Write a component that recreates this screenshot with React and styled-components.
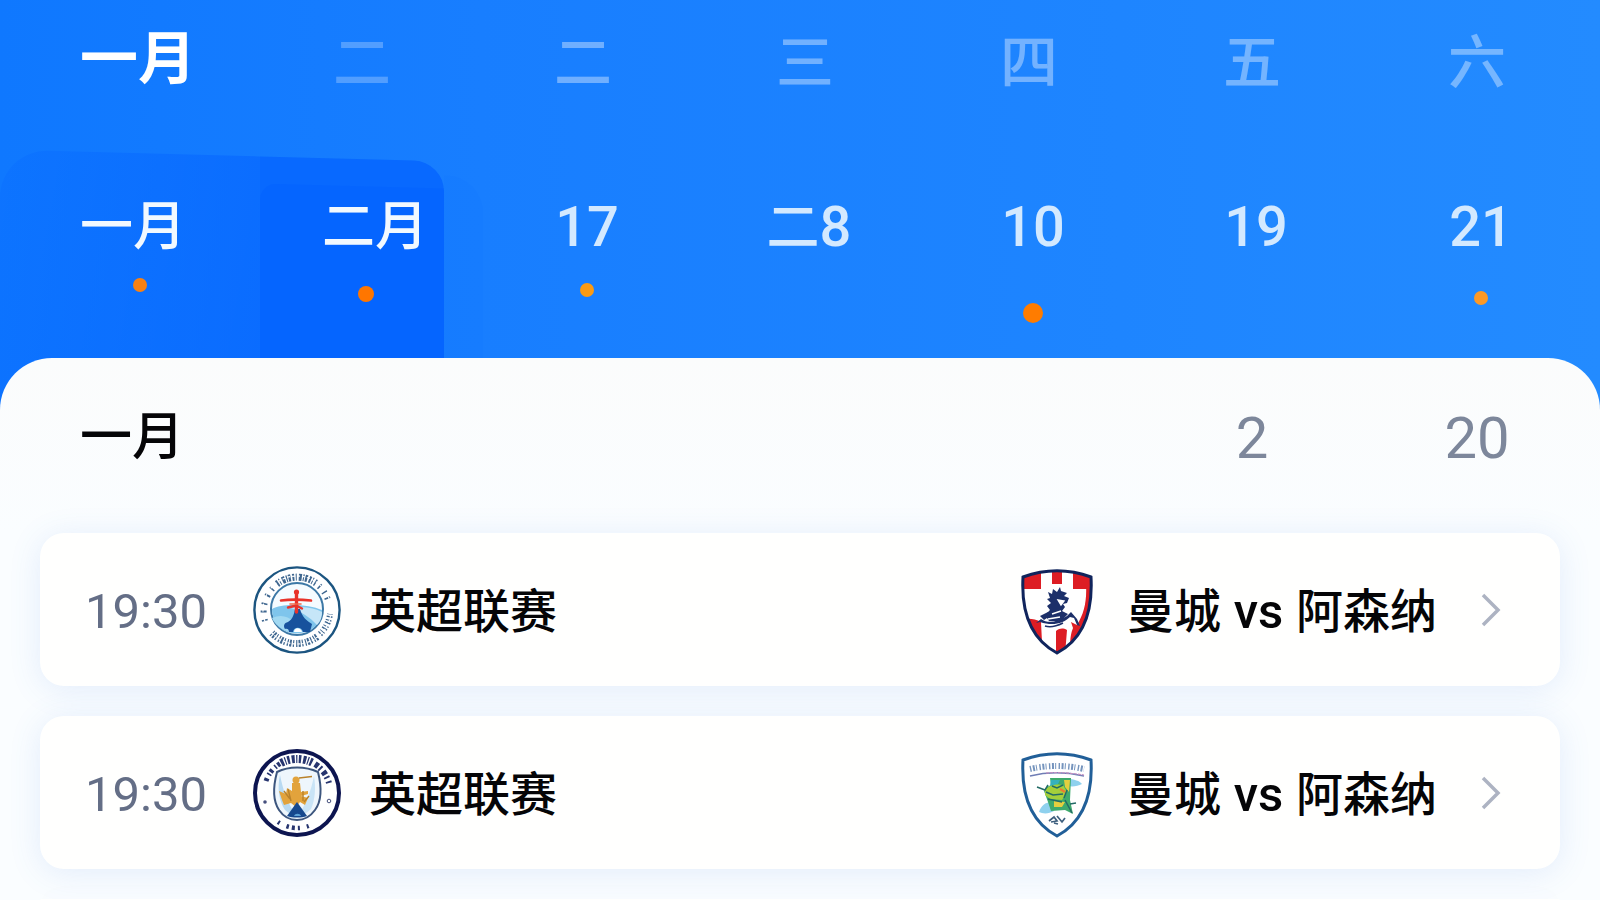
import React, { useState } from 'react';
import styled, { createGlobalStyle, css } from 'styled-components';

const GlobalStyle = createGlobalStyle`
  * {
    box-sizing: border-box;
  }

  body {
    margin: 0;
    background: #fafcff;
    font-family: Roboto, "Noto Sans CJK SC", sans-serif;
  }

  h1, h2, ul {
    margin: 0;
    padding: 0;
  }
`;

const Page = styled.div`
  min-height: 100vh;
  display: flex;
  flex-direction: column;
  overflow: hidden;
  background: linear-gradient(90deg, #0f78ff 0%, #187eff 30%, #1e85ff 70%, #238bff 100%);
`;

const weekGrid = css`
  display: grid;
  grid-template-columns: 224fr 220fr 222fr 222fr 226fr 220fr 230fr;
  padding: 0 8px 0 28px;
`;

const Header = styled.header`
  position: relative;
  padding: 27px 0 35px;
`;

/* tinted panels that sit behind the current months */
const Tint = styled.div`
  position: absolute;
  top: ${props => props.$top}px;
  bottom: -80px;
  left: ${props => props.$left}%;
  width: ${props => props.$width}%;
  border-radius: ${props => props.$radius};
  background: ${props => props.$fill};
  transform: skewY(1.5deg);
`;

const WeekRow = styled.div`
  ${weekGrid}
  position: relative;
  align-items: end;
  margin-bottom: 104px;
`;

const Month = styled.h1`
  padding-left: 52px;
  font-size: 58px;
  line-height: 64px;
  font-weight: 700;
  color: #fff;
`;

const Weekday = styled.span`
  text-align: center;
  font-size: 58px;
  line-height: 56px;
  font-weight: 500;
  color: ${props => (props.$faint ? 'rgba(255, 255, 255, 0.26)' : 'rgba(255, 255, 255, 0.38)')};
`;

const DayRow = styled.div`
  ${weekGrid}
  position: relative;
  align-items: start;
`;

const DayButton = styled.button`
  display: flex;
  flex-direction: column;
  align-items: center;
  min-height: 127px;
  padding: 0 ${props => (props.$align === 'flex-start' ? 52 : 44)}px 0 52px;
  border: none;
  background: none;
  font: inherit;
  cursor: pointer;
`;

const DayLabel = styled.span`
  align-self: ${props => props.$align || 'center'};
  font-size: 53px;
  line-height: 64px;
  font-weight: 500;
  white-space: nowrap;
  color: ${props => (props.$month ? '#f2f9ff' : '#d3e9ff')};
`;

const Numeral = styled.span`
  font-size: 56px;
`;

const Dot = styled.span`
  width: ${props => props.$size}px;
  height: ${props => props.$size}px;
  margin-top: ${props => 19 + props.$drop}px;
  border-radius: 50%;
  background: ${props => props.$color};
`;

const Sheet = styled.main`
  position: relative;
  flex: 1;
  display: flex;
  flex-direction: column;
  padding-top: 48px;
  border-radius: 52px 52px 0 0;
  background: linear-gradient(#fbfcfc, #fafdff 175px, #fafdff);
`;

const SheetHead = styled.div`
  ${weekGrid}
  align-items: center;
  margin-bottom: 63px;
`;

const SheetTitle = styled.h2`
  grid-column: 1 / span 5;
  padding-left: 52px;
  font-size: 52px;
  line-height: 64px;
  font-weight: 500;
  color: #050507;
`;

const Count = styled.span`
  text-align: center;
  font-size: 58px;
  line-height: 64px;
  color: #7d879b;
`;

const MatchList = styled.ul`
  flex: 1;
  display: flex;
  flex-direction: column;
  gap: 30px;
  padding: 0 40px;
  list-style: none;
`;

const cardLook = css`
  background: #fffffe;
  box-shadow: 0 4px 32px rgba(70, 125, 225, 0.13);
`;

const MatchItem = styled.li`
  ${cardLook}
  border-radius: 24px;
`;

const NextItem = styled.li`
  ${cardLook}
  flex: 1;
  min-height: 2px;
  border-radius: 24px 24px 0 0;
`;

const MatchLink = styled.a`
  display: flex;
  align-items: center;
  height: 153px;
  padding: 0 59px 0 45px;
  color: #050507;
  text-decoration: none;
`;

const Time = styled.time`
  width: 168px;
  padding-top: 4px;
  font-size: 49px;
  line-height: 64px;
  color: #646e86;
`;

const Name = styled.span`
  padding-top: 4px;
  font-size: 47px;
  line-height: 64px;
  font-weight: 500;
  white-space: nowrap;
`;

const League = styled.div`
  display: flex;
  align-items: center;
  gap: 28px;
  margin-right: auto;
`;

const Teams = styled.div`
  display: flex;
  align-items: center;
  gap: 34px;
  margin-right: 44px;
`;

const Versus = styled.span`
  margin: 0 1px;
  font-size: 49px;
`;

const RoundCrest = styled.svg`
  flex: none;
  width: 88px;
  height: 88px;
`;

const ShieldCrest = styled.svg`
  flex: none;
  width: 72px;
  height: 86px;
  margin-top: 4px;
`;

const Arrow = styled.svg`
  flex: none;
  width: 20px;
  height: 34px;
`;

const SeaCrest = () => (
  <RoundCrest viewBox="0 0 88 88" aria-hidden="true">
    <circle cx="44" cy="44" r="42.6" fill="#fff" stroke="#1c5580" strokeWidth="2.4" />
    <g fill="none" stroke="#3f6790" strokeWidth="7">
      <path d="M24 18a33 33 0 0 1 39 -1" strokeDasharray="2 1.4 1 2 3 1.2 1.2 1 2.4 1.6" />
      <path d="M66 20a33 33 0 0 1 10 18" strokeDasharray="1.6 6 1.4 5" strokeWidth="6" />
      <path d="M12 55a34 34 0 0 1 9 -34" strokeDasharray="1.6 7 2 6" strokeWidth="6" />
      <path d="M19 67a34 34 0 0 0 46 3" strokeDasharray="1.2 1.2 2 1.4 1.2 2" />
      <path d="M67 68a34 34 0 0 0 10 -20" strokeDasharray="1.4 1.6 1 2.4" strokeWidth="6" />
    </g>
    <g fill="none" stroke="#fff" strokeWidth="1.2" strokeDasharray="3 2">
      <circle cx="44" cy="44" r="34" />
    </g>
    <circle cx="44" cy="43" r="26" fill="#f5fbff" stroke="#3c78a6" strokeWidth="2" />
    <path d="M19 43c10-6 36-5 50 1c0 8-4 15-10 19c-10 6-23 6-32-1c-5-5-8-12-8-19z" fill="#7fc5ec" />
    <path d="M38 42c12-2 24 0 31 4c0 6-2 10-5 13c-7-8-16-13-26-17z" fill="#c6e6f8" />
    <path d="M19 52c9-4 15-2 23 4l-6 10c-8-3-14-7-17-14z" fill="#a2d9f2" />
    <path d="M42 43h5c2 8 7 12 12 15l-2 8h-7c-1-5-9-6-10 0h-4c0-3-2-4-4-3c-2-3-1-6 3-7c5-3 6-8 7-13z" fill="#17529d" />
    <path d="M41 66c0-5 7-5 8 0z" fill="#fff" />
    <g stroke="#e8332a" fill="none" strokeLinecap="round">
      <path d="M43.5 26v20" strokeWidth="3.4" />
      <path d="M28 34.5c8-1 20-1 30 0" strokeWidth="2.6" />
      <path d="M35 41.5l8-2l6 3" strokeWidth="2.4" />
      <path d="M37 38l11 0" strokeWidth="1.6" stroke="#f06a4a" />
    </g>
    <circle cx="43.5" cy="26" r="2.6" fill="#e8332a" />
  </RoundCrest>
);

const RiderCrest = () => (
  <RoundCrest viewBox="0 0 88 88" aria-hidden="true">
    <circle cx="44" cy="44" r="42" fill="#fff" stroke="#0d1550" strokeWidth="4" />
    <g fill="none" stroke="#27356f">
      <path d="M13 32a34 34 0 0 1 15 -18" strokeWidth="5" strokeDasharray="3 3.6 1.6 1.6" />
      <path d="M28 14a34 34 0 0 1 32 0" strokeWidth="8" strokeDasharray="3 1.4 1.2 1.4 2.4 2" />
      <path d="M62 15a34 34 0 0 1 14 19" strokeWidth="6" strokeDasharray="4 2 2 3" />
      <path d="M25 73a34 34 0 0 0 37 1" strokeWidth="4.5" strokeDasharray="2 7.5 2.5 3 3 3 2 7" />
    </g>
    <circle cx="12" cy="53" r="1.8" fill="#46507e" />
    <circle cx="76" cy="52" r="1.8" fill="none" stroke="#46507e" />
    <path d="M24 23c12-6 28-6 41 0c4 16 3 30-3 38c-5 7-11 10-18 10s-14-4-18-10c-6-9-6-23-2-38z" fill="#eef6fc" stroke="#3d567e" strokeWidth="2" />
    <path d="M27 26c-3 13-1 26 5 35c3 3 7 5 12 6c-9-11-14-26-17-41z" fill="#b8daf2" />
    <path d="M61 27c2 12 1 24-3 33c-4 4-8 6-13 7c8-12 13-25 16-40z" fill="#c9e4f6" />
    <g fill="#e2a33c">
      <circle cx="43" cy="31" r="3.5" />
      <path d="M39 34h8l1 9l7-1v3l-7 2l7 2l-3 7l-5-3l-4 5l-5-4l-7 2l-2-5l-3-9l7 3l1-6l5 3z" />
    </g>
    <path d="M46 29l13-1.5M31 42l6 8M35 40l3 12M50 42v10M56 47l-5 6" stroke="#b9822b" strokeWidth="1.4" fill="none" />
    <path d="M44 53l10 14c-6 2-14 2-20 0z" fill="#17498e" />
    <path d="M41 67c1-3 6-3 7 0z" fill="#5da2d8" />
  </RoundCrest>
);

const shieldPath = 'M2 8C24 0 48 0 70 8C72 44 62 70 36 84C10 70 0 44 2 8Z';

const LionShield = () => (
  <ShieldCrest viewBox="0 0 72 86" aria-hidden="true">
    <clipPath id="lion-shield">
      <path d={shieldPath} />
    </clipPath>
    <g clipPath="url(#lion-shield)">
      <path d="M0 0h72v86H0z" fill="#fff" />
      <path d="M0 0h20v20H0zM31 0h10v15H31zM52 0h20v20H52z" fill="#dd1d24" />
      <path d="M65 16c1 16-2 29-9 40l-6-3l2 6c-2 5-3 10-3 20l23-12V16z" fill="#dd1d24" />
      <path d="M0 51c5-2 13-2 20 2l1 20L0 76zM35 62c4-3 7-3 11-1l-2 25h-9z" fill="#dd1d24" />
    </g>
    <g fill="#1c2f69">
      <path d="M27 23l4 2l1-5l4 3l3-5l1 4l6 2l-3 3l5 2l-2 5l-4 1l2 3l-3 4l6 3l-5 5l-5 2H28l-4-6l5-5l-3-4l4-3l-4-4l3-1z" />
      <path d="M20 50c7 5 16 3 26-3l4-4l6 7l3 7l-3-1l-3-7l-4-1c-7 7-18 9-30 5l-4 1z" />
      <path d="M19 47l8-4l2 4l-6 4z" />
    </g>
    <path d="M37 31l6 1l-3 4zM31 45l9-3M44 37l4-3M27 50l12-2" stroke="#fff" strokeWidth="1.4" fill="#fff" />
    <path d="M24 57c6 2 12 0 18-3" stroke="#1c2f69" strokeWidth="1.5" fill="none" />
    <path d={shieldPath} fill="none" stroke="#10245c" strokeWidth="3" />
  </ShieldCrest>
);

const DragonShield = () => (
  <ShieldCrest viewBox="0 0 72 86" aria-hidden="true">
    <path d={shieldPath} fill="#fff" stroke="#215f98" strokeWidth="3" />
    <g fill="none">
      <path d="M9 17c17-4 36-4 54 0" stroke="#7594bd" strokeWidth="6" strokeDasharray="1.4 1.6 2 1.2 1 2.4" />
      <path d="M9 24c16-4 36-4 54 0" stroke="#6f7db5" strokeWidth="1.4" />
      <path d="M25 21c12-1 25 0 38 2" stroke="#c58fc0" strokeWidth="1.2" strokeDasharray="3 1" />
    </g>
    <path d="M46 27c7 0 13 2 15 5c-4 2-9 3-14 2zM18 60c2-6 6-10 13-10l2 9c-5 3-11 3-15 1z" fill="#8fd1ee" />
    <path d="M29 26h21l-1 22l3 14l-8-4l-14 1l-3-9l-4-11l3-4l4-2z" fill="#3eaa6c" />
    <path d="M24 37l9-5l9 1l4 7l-5 8l-12-1l-5-4z" fill="#a4cf3b" />
    <path d="M43 28h6l-1 12l-4-5zM33 49l11 1l-3 5h-8z" fill="#e5cf3f" />
    <path d="M30 28l9 0l-2 4l-8 2z" fill="#36b1bd" />
    <path d="M16 35l8 3l3-5M25 40l7 3l10-1M31 34l5 2l6-3M27 47l14 3M44 48l7 13M46 38l-3 8M49 52l6-1" stroke="#236b66" strokeWidth="1.5" fill="none" />
    <path d="M39 37l5 3" stroke="#ee7a32" strokeWidth="2.4" />
    <path d="M28 69l5-4l3 4l-6 1M36 64l5 6l3-4M33 71l4 1" stroke="#3e5f7e" strokeWidth="1.7" fill="none" />
  </ShieldCrest>
);

const weekdays = ['二', '二', '三', '四', '五', '六'];

const days = [
  { id: 'jan', text: '一月', month: true, align: 'flex-start', dot: { size: 14, drop: 0, color: '#f98112' } },
  { id: 'feb', text: '二月', month: true, align: 'flex-end', dot: { size: 16, drop: 8, color: '#ff7600' } },
  { id: '17', number: '17', dot: { size: 14, drop: 4, color: '#fb9a12' } },
  { id: '18', text: '二', number: '8' },
  { id: '10', number: '10', dot: { size: 20, drop: 24, color: '#ff7c00' } },
  { id: '19', number: '19' },
  { id: '21', number: '21', dot: { size: 14, drop: 12, color: '#fc9926' } },
];

const matches = [
  { id: 1, time: '19:30', league: '英超联赛', home: '曼城', away: '阿森纳', LeagueCrest: SeaCrest, TeamCrest: LionShield },
  { id: 2, time: '19:30', league: '英超联赛', home: '曼城', away: '阿森纳', LeagueCrest: RiderCrest, TeamCrest: DragonShield },
];

const App = () => {
  const [selected, setSelected] = useState('feb');

  return (
    <>
      <GlobalStyle />
      <Page>
        <Header>
          <Tint $top={153} $left={0} $width={16.25} $radius="48px 0 0 0" $fill="linear-gradient(100deg, rgba(0, 92, 255, 0.15), rgba(0, 92, 255, 0.5))" />
          <Tint $top={176} $left={27.75} $width={2.4375} $radius="0 36px 0 0" $fill="rgba(0, 98, 255, 0.08)" />
          <Tint $top={159} $left={16.25} $width={11.5} $radius="0 30px 0 0" $fill="#0869ff" />
          <Tint $top={186} $left={16.25} $width={11.5} $radius="16px 0 0 0" $fill="rgba(0, 94, 255, 0.35)" />
          <WeekRow>
            <Month>一月</Month>
            {weekdays.map((day, index) => (
              <Weekday key={index} $faint={index === 0}>{day}</Weekday>
            ))}
          </WeekRow>
          <DayRow>
            {days.map((day) => (
              <DayButton
                key={day.id}
                type="button"
                $align={day.align}
                aria-pressed={selected === day.id}
                onClick={() => setSelected(day.id)}
              >
                <DayLabel $month={day.month} $align={day.align}>
                  {day.text}
                  {day.number && <Numeral>{day.number}</Numeral>}
                </DayLabel>
                {day.dot && (
                  <Dot $size={day.dot.size} $drop={day.dot.drop} $color={day.dot.color} />
                )}
              </DayButton>
            ))}
          </DayRow>
        </Header>
        <Sheet>
          <SheetHead>
            <SheetTitle>一月</SheetTitle>
            <Count>2</Count>
            <Count>20</Count>
          </SheetHead>
          <MatchList>
            {matches.map(({ id, time, league, home, away, LeagueCrest, TeamCrest }) => (
              <MatchItem key={id}>
                <MatchLink href={`#match-${id}`}>
                  <Time>{time}</Time>
                  <League>
                    <LeagueCrest />
                    <Name>{league}</Name>
                  </League>
                  <Teams>
                    <TeamCrest />
                    <Name>
                      {home} <Versus>vs</Versus> {away}
                    </Name>
                  </Teams>
                  <Arrow viewBox="0 0 20 34" aria-hidden="true">
                    <path d="M2 2l15 15L2 32" fill="none" stroke="#adb3c2" strokeWidth="3.5" />
                  </Arrow>
                </MatchLink>
              </MatchItem>
            ))}
            <NextItem />
          </MatchList>
        </Sheet>
      </Page>
    </>
  );
};

export default App;
